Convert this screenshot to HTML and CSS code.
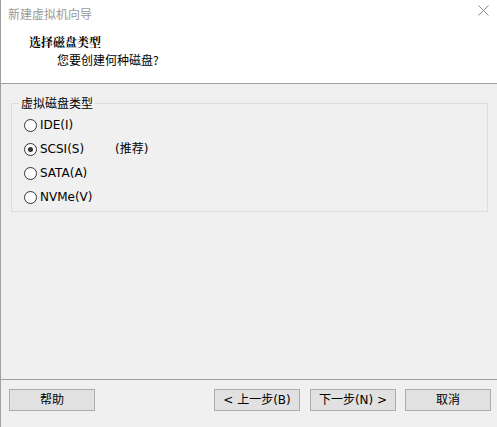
FILE: index.html
```html
<!DOCTYPE html>
<html>
<head>
<meta charset="utf-8">
<link rel="stylesheet" href="styles.css">
</head>
<body>
<div class="window">
  <div class="header">
    <div class="titlebar">
      <span class="title">新建虚拟机向导</span>
      <svg class="close" width="11" height="11" viewBox="0 0 11 11"><path d="M0.5 0.5 L10.5 10.5 M10.5 0.5 L0.5 10.5" stroke="#8a8a8a" stroke-width="1" fill="none"/></svg>
    </div>
    <div class="heading">选择磁盘类型</div>
    <div class="subheading">您要创建何种磁盘?</div>
  </div>
  <div class="content">
    <fieldset class="group">
      <legend>虚拟磁盘类型</legend>
      <div class="option"><span class="radio"></span><span class="text">IDE(I)</span></div>
      <div class="option"><span class="radio checked"></span><span class="text label">SCSI(S)</span><span class="text">(推荐)</span></div>
      <div class="option"><span class="radio"></span><span class="text">SATA(A)</span></div>
      <div class="option"><span class="radio"></span><span class="text">NVMe(V)</span></div>
    </fieldset>
  </div>
  <div class="footer">
    <button class="btn">帮助</button>
    <div class="spacer"></div>
    <button class="btn">&lt; 上一步(B)</button>
    <button class="btn">下一步(N) &gt;</button>
    <button class="btn cancel">取消</button>
  </div>
</div>
</body>
</html>
```
FILE: styles.css
```css
html, body {
  margin: 0;
  padding: 0;
}
body {
  width: 497px;
  height: 427px;
  overflow: hidden;
  font-family: "Noto Sans CJK SC", "Liberation Sans", sans-serif;
  font-size: 12px;
  color: #000;
}
.window {
  width: 497px;
  height: 427px;
  box-sizing: border-box;
  border-left: 1px solid #a0a0a0;
  display: flex;
  flex-direction: column;
  background: #f0f0f0;
}
.header {
  background: #fff;
  height: 83px;
  border-bottom: 1px solid #a0a0a0;
  box-sizing: content-box;
  position: relative;
}
.titlebar {
  height: 28px;
  display: flex;
  align-items: center;
  padding-left: 7px;
}
.title {
  color: #999;
  font-size: 12px;
  line-height: 16px;
  margin-top: -1px;
}
.close {
  position: absolute;
  left: 477px;
  top: 5px;
}
.heading {
  font-family: "Noto Serif CJK SC", "Noto Sans CJK SC", serif;
  font-weight: bold;
  font-size: 12px;
  line-height: 16px;
  padding-left: 28px;
  margin-top: 6px;
}
.subheading {
  font-size: 12px;
  line-height: 16px;
  padding-left: 56px;
  margin-top: 2px;
}
.content {
  flex: 1;
  padding: 12px 9px 0 10px;
}
.group {
  margin: 0;
  border: 1px solid #dcdcdc;
  padding: 3px 0 10px 12px;
  height: 116px;
  box-sizing: border-box;
  width: 477px;
}
.group legend {
  padding: 0 2px;
  margin-left: -5px;
  font-size: 12px;
  line-height: 14px;
}
.option {
  display: flex;
  align-items: center;
  height: 24px;
  font-family: "DejaVu Sans", "Noto Sans CJK SC", sans-serif;
  font-size: 12px;
}
.text {
  display: block;
  line-height: 14px;
  height: 14px;
}
.radio {
  width: 11px;
  height: 11px;
  border: 1px solid #333;
  border-radius: 50%;
  background: #fff;
  margin-right: 3px;
  box-sizing: content-box;
  position: relative;
}
.radio.checked::after {
  content: "";
  position: absolute;
  left: 3px;
  top: 3px;
  width: 5px;
  height: 5px;
  border-radius: 50%;
  background: #333;
}
.label {
  width: 75px;
}
.footer {
  height: 38px;
  border-top: 1px solid #a0a0a0;
  display: flex;
  align-items: flex-start;
  padding: 9px 6px 0 8px;
  gap: 10px;
}
.spacer {
  flex: 1;
}
.btn {
  width: 86px;
  height: 22px;
  margin: 0;
  padding: 0;
  background: #e1e1e1;
  border: 1px solid #adadad;
  font-family: "DejaVu Sans", "Noto Sans CJK SC", sans-serif;
  font-size: 12px;
  color: #000;
  line-height: 18px;
}
.cancel {
  margin-left: -1px;
}
```
